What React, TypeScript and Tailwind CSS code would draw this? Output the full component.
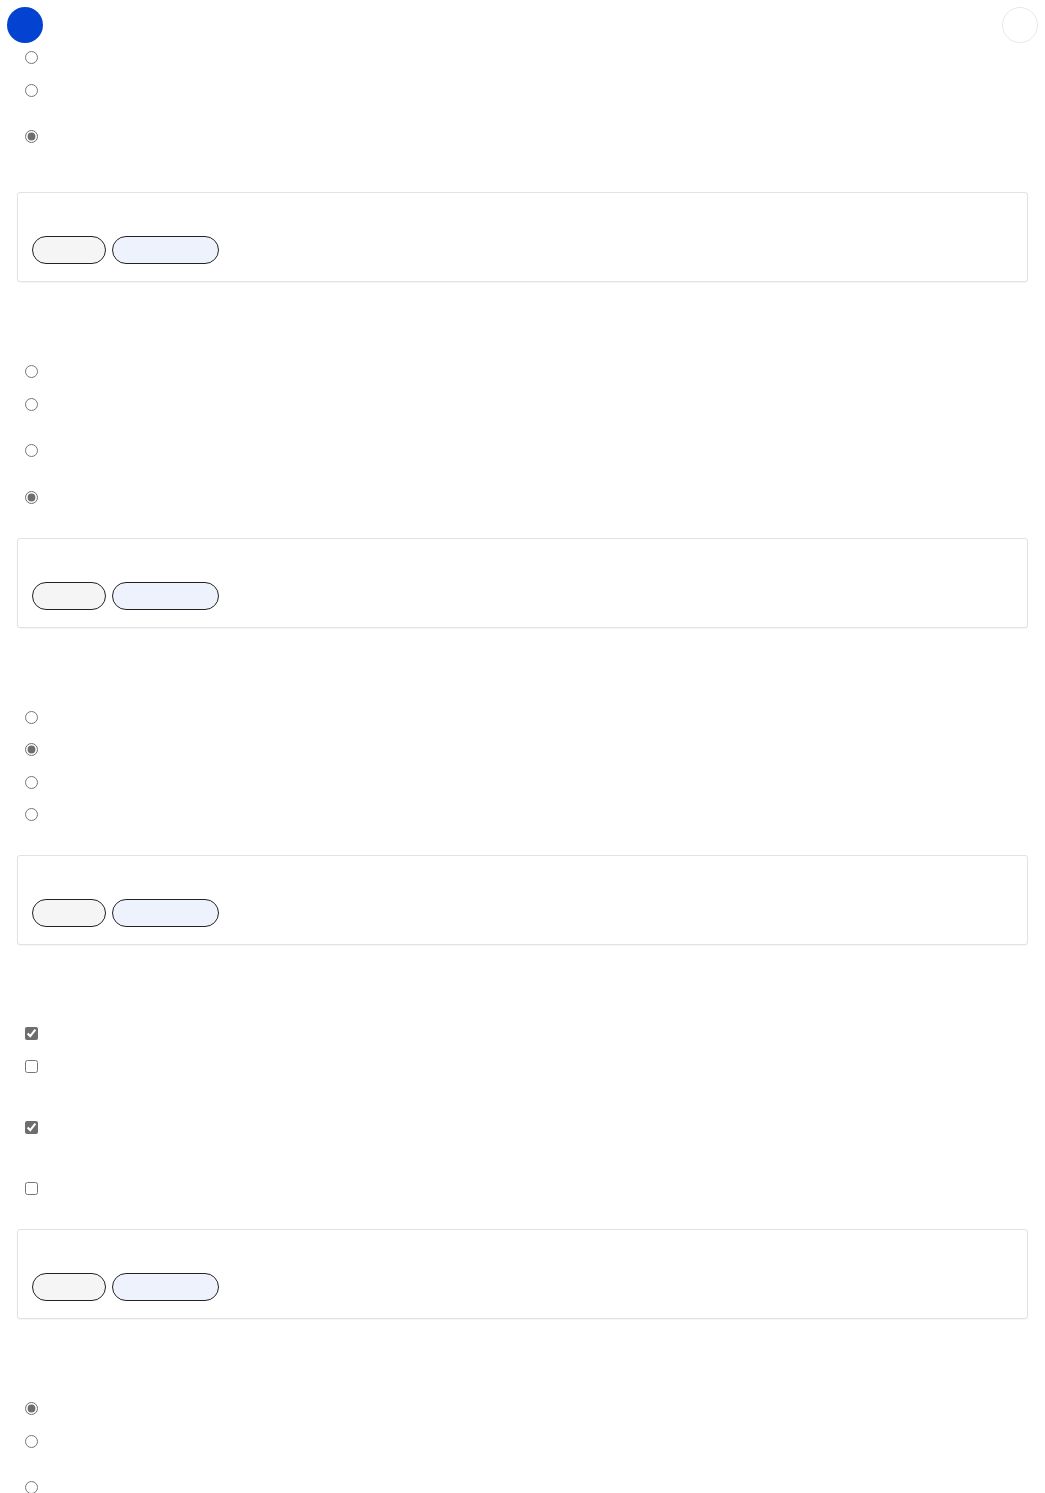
import React from 'react'

type Opt = { kind: 'radio' | 'checkbox'; checked?: boolean; mt: string }

type Question = {
  id: string
  top: string
  opts: Opt[]
  boxGap: string
}

const questions: Question[] = [
  {
    id: 'q1',
    top: 'mt-[1px]',
    opts: [
      { kind: 'radio', mt: 'mt-0' },
      { kind: 'radio', mt: 'mt-[20px]' },
      { kind: 'radio', checked: true, mt: 'mt-[33px]' },
    ],
    boxGap: 'mt-[49px]',
  },
  {
    id: 'q2',
    top: 'mt-[83px]',
    opts: [
      { kind: 'radio', mt: 'mt-0' },
      { kind: 'radio', mt: 'mt-[20px]' },
      { kind: 'radio', mt: 'mt-[33px]' },
      { kind: 'radio', checked: true, mt: 'mt-[34px]' },
    ],
    boxGap: 'mt-[34px]',
  },
  {
    id: 'q3',
    top: 'mt-[83px]',
    opts: [
      { kind: 'radio', mt: 'mt-0' },
      { kind: 'radio', checked: true, mt: 'mt-[19px]' },
      { kind: 'radio', mt: 'mt-[20px]' },
      { kind: 'radio', mt: 'mt-[19px]' },
    ],
    boxGap: 'mt-[34px]',
  },
  {
    id: 'q4',
    top: 'mt-[82px]',
    opts: [
      { kind: 'checkbox', checked: true, mt: 'mt-0' },
      { kind: 'checkbox', mt: 'mt-[20px]' },
      { kind: 'checkbox', checked: true, mt: 'mt-[48px]' },
      { kind: 'checkbox', mt: 'mt-[48px]' },
    ],
    boxGap: 'mt-[34px]',
  },
  {
    id: 'q5',
    top: 'mt-[83px]',
    opts: [
      { kind: 'radio', checked: true, mt: 'mt-0' },
      { kind: 'radio', mt: 'mt-[20px]' },
      { kind: 'radio', mt: 'mt-[33px]' },
    ],
    boxGap: '',
  },
]

function Feedback() {
  return (
    <div className="mx-[17px] h-[90px] rounded-[3px] border border-[#e2e2e2] bg-white px-[14px] pt-[43px] shadow-[0_1px_1px_rgba(0,0,0,0.04)]">
      <div className="flex gap-[6px]">
        <button className="h-[28px] w-[74px] rounded-full border border-[#222] bg-[#f5f5f5]" />
        <button className="h-[28px] w-[107px] rounded-full border border-[#222] bg-[#eef2fd]" />
      </div>
    </div>
  )
}

export default function App() {
  return (
    <div className="min-h-[1493px] w-full bg-white font-['Liberation_Sans',sans-serif] text-white">
      {/* header */}
      <div className="flex h-[50px] items-start justify-between px-[7px] pt-[7px]">
        <div className="h-[36px] w-[36px] rounded-full bg-[#0443d1]" />
        <div className="h-[36px] w-[36px] rounded-full border border-[#e8e8e8] bg-white" />
      </div>

      {questions.map((q, qi) => (
        <section key={q.id} className={q.top}>
          <div className="flex flex-col pl-[25px]">
            {q.opts.map((o, i) => (
              <label key={i} className={`flex h-[13px] items-center ${o.mt}`}>
                <input
                  type={o.kind}
                  name={q.id}
                  defaultChecked={o.checked}
                  className="m-0 h-[13px] w-[13px] accent-[#6e6e6e]"
                />
              </label>
            ))}
          </div>
          {qi < questions.length - 1 && (
            <div className={q.boxGap}>
              <Feedback />
            </div>
          )}
        </section>
      ))}
    </div>
  )
}
